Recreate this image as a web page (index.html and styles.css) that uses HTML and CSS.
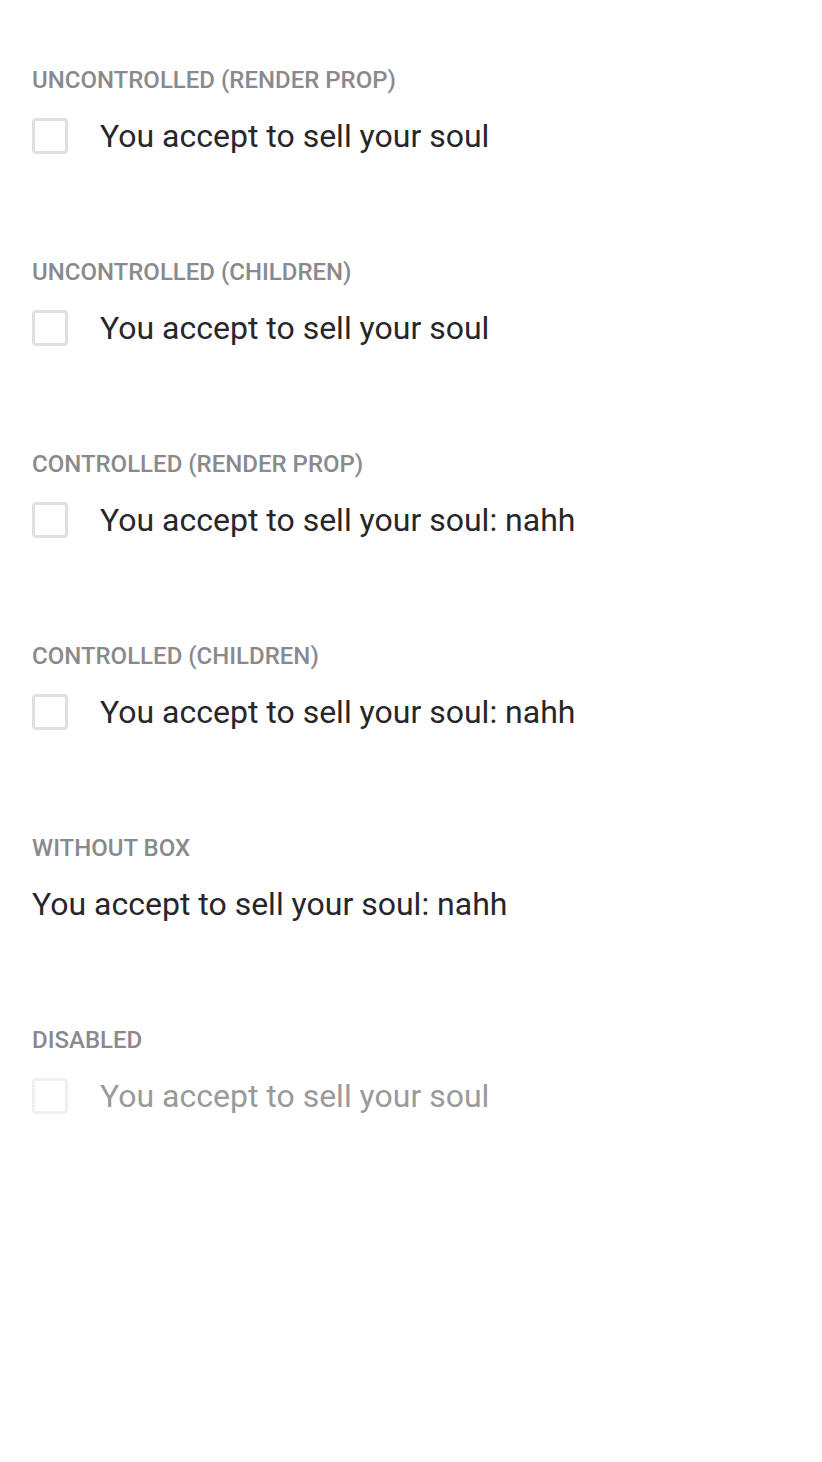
FILE: index.html
```html
<!DOCTYPE html>
<html>
<head>
<meta charset="utf-8">
<link rel="stylesheet" href="styles.css">
</head>
<body>
<main class="page">
  <section class="demo">
    <h2 class="demo-title">Uncontrolled (render prop)</h2>
    <label class="check">
      <span class="box"></span>
      <span class="check-text">You accept to sell your soul</span>
    </label>
  </section>
  <section class="demo">
    <h2 class="demo-title">Uncontrolled (children)</h2>
    <label class="check">
      <span class="box"></span>
      <span class="check-text">You accept to sell your soul</span>
    </label>
  </section>
  <section class="demo">
    <h2 class="demo-title">Controlled (render prop)</h2>
    <label class="check">
      <span class="box"></span>
      <span class="check-text">You accept to sell your soul: nahh</span>
    </label>
  </section>
  <section class="demo">
    <h2 class="demo-title">Controlled (children)</h2>
    <label class="check">
      <span class="box"></span>
      <span class="check-text">You accept to sell your soul: nahh</span>
    </label>
  </section>
  <section class="demo">
    <h2 class="demo-title">Without box</h2>
    <label class="check">
      <span class="check-text">You accept to sell your soul: nahh</span>
    </label>
  </section>
  <section class="demo">
    <h2 class="demo-title">Disabled</h2>
    <label class="check check-disabled">
      <span class="box"></span>
      <span class="check-text">You accept to sell your soul</span>
    </label>
  </section>
</main>
</body>
</html>
```
FILE: styles.css
```css
html, body {
  margin: 0;
  padding: 0;
  background: #ffffff;
}
body {
  font-family: Roboto, "Noto Sans", "Liberation Sans", sans-serif;
}
.page {
  display: flex;
  flex-direction: column;
  gap: 106px;
  padding: 68px 32px 32px;
}
.demo {
  display: flex;
  flex-direction: column;
  gap: 26px;
}
.demo-title {
  margin: 0;
  font-size: 24px;
  line-height: 24px;
  font-weight: 500;
  text-transform: uppercase;
  color: #8a8a8e;
}
.check {
  display: flex;
  align-items: center;
  gap: 32px;
  height: 36px;
}
.box {
  box-sizing: border-box;
  width: 36px;
  height: 36px;
  border: 3px solid #e0e0e0;
  border-radius: 4px;
  background: #fff;
}
.check-text {
  font-size: 32px;
  line-height: 36px;
  color: #26262b;
}
.check-disabled .box {
  border-color: #f0f0f0;
}
.check-disabled .check-text {
  color: #9a9a9a;
}
```
